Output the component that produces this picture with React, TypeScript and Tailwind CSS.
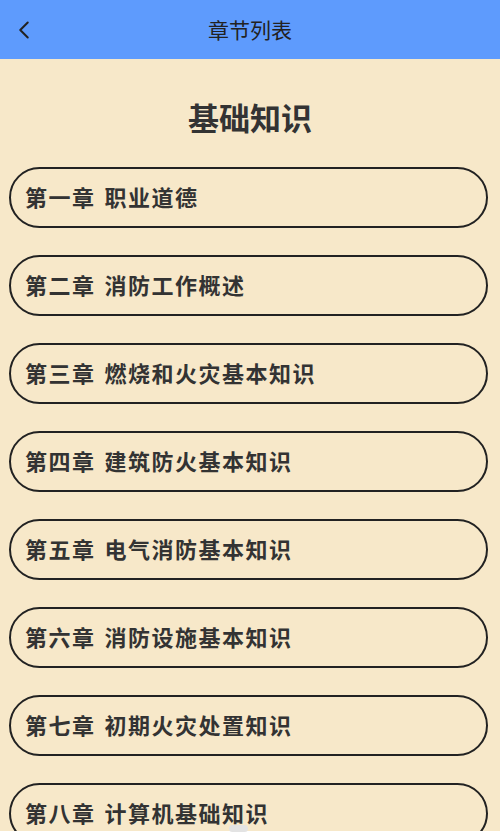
import { ChevronLeft } from 'lucide-react';

const CHAPTERS = [
  ['第一章', '职业道德'],
  ['第二章', '消防工作概述'],
  ['第三章', '燃烧和火灾基本知识'],
  ['第四章', '建筑防火基本知识'],
  ['第五章', '电气消防基本知识'],
  ['第六章', '消防设施基本知识'],
  ['第七章', '初期火灾处置知识'],
  ['第八章', '计算机基础知识'],
];

export default function App() {
  return (
    <div
      className="relative h-[836px] w-[500px] flex flex-col bg-white overflow-hidden"
      style={{ fontFamily: '"Noto Sans CJK SC", "Noto Sans", sans-serif' }}
    >
      {/* Top bar */}
      <header className="h-[59px] shrink-0 bg-[#5e9bfd] flex items-center relative">
        <button className="absolute left-[9px] top-[15px] text-[#222]">
          <ChevronLeft className="w-[30px] h-[30px]" strokeWidth={1.6} />
        </button>
        <h1 className="w-full text-center text-[21px] text-[#222] leading-none">章节列表</h1>
      </header>

      {/* Chapter list */}
      <main className="h-[772px] shrink-0 bg-[#f7e8c9] overflow-hidden">
        <h2 className="mt-[38px] mb-[30px] text-center text-[31px] font-bold text-[#333] leading-[40px]">
          基础知识
        </h2>
        <div className="flex flex-col gap-[27px] pl-[9px] pr-[12px]">
          {CHAPTERS.map(([num, title]) => (
            <div
              key={num}
              className="h-[61px] shrink-0 rounded-full border-2 border-[#222] flex items-center gap-[9px] pl-[14px] pb-[3px] text-[22px] font-bold text-[#333] tracking-[1.5px]"
            >
              <span>{num}</span>
              <span>{title}</span>
            </div>
          ))}
        </div>
      </main>

      {/* Scroll indicator */}
      <div className="absolute left-[229px] top-[825px] w-[19px] h-[7px] rounded-full bg-[#e3e3e3]" />
    </div>
  );
}
